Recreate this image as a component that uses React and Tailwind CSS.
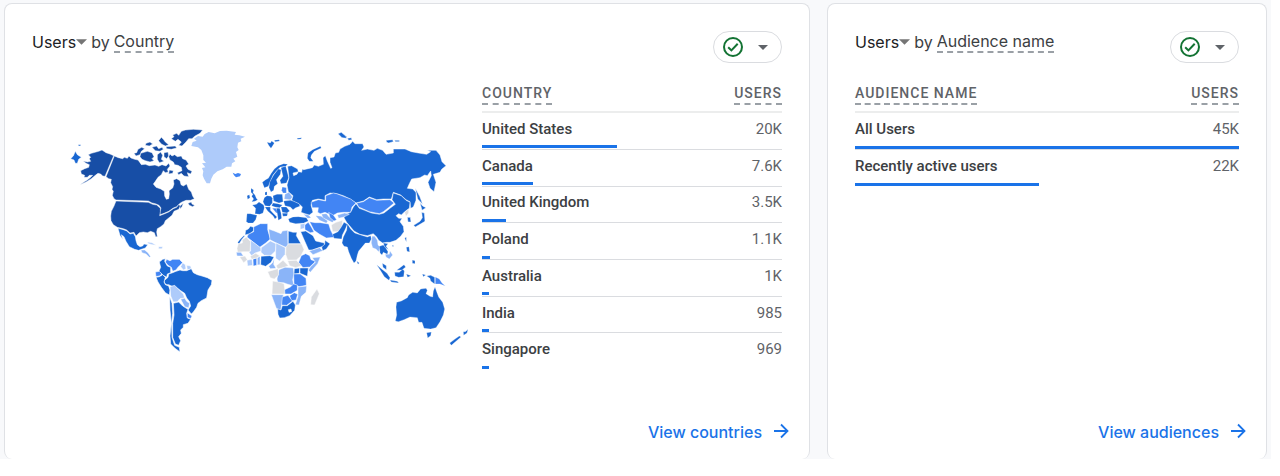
import React from "react";

const NAVY = "#174ea6";
const BLUE = "#1967d2";
const MID = "#4285f4";
const SOFT = "#8ab4f8";
const PALE = "#aecbfa";
const NONE = "#dadce0";

/* Each region: origin on the map, border width, then [fill, polygon points] for its lands. */
const REGIONS = [
  {
    name: "north-america",
    x: 180,
    y: 360,
    border: 1.4,
    lands: [
      [NAVY, "163,108 175,113 188,116 193,112 202,115 207,108 213,114 224,118 234,120 240,128 244,134 256,133 268,137 285,135 296,139 306,134 318,138 326,130 330,138 322,148 325,156 316,158 310,152 304,164 294,172 286,184 280,192 288,202 302,207 313,214 314,228 319,238 326,236 328,222 327,212 338,204 342,192 340,180 350,176 360,182 363,194 370,198 380,192 386,208 394,216 398,228 403,236 392,241 378,241 366,246 360,250 350,260 340,264 326,274 312,280 300,284 300,276 303,264 297,256 286,251 276,249 265,243 168,240 162,236 157,226 160,214 156,208 158,200 152,188 154,178 146,176 138,170"],
      [NAVY, "161,107 150,102 138,98 126,90 116,94 108,96 94,100 85,104 92,112 88,116 92,124 82,126 70,123 78,130 88,134 86,142 74,146 62,152 64,162 74,166 72,172 82,172 88,166 98,166 92,172 82,180 72,186 60,194 78,186 94,176 106,166 114,160 122,162 128,168 135,169"],
      [NAVY, "168,243 265,247 278,253 290,255 301,265 301,275 299,287 312,282 326,276 340,266 350,262 356,254 362,258 356,268 342,274 336,286 326,294 316,302 312,312 302,320 292,326 290,336 292,350 287,350 283,338 272,334 262,338 250,336 238,338 228,348 222,337 210,339 200,330 190,326 172,322 160,314 153,302 152,288 154,274 162,258"],
      [NAVY, "360,258 370,250 366,260 360,266"],
      [NAVY, "384,250 394,246 396,252 404,256 398,260 388,256"],
      [NAVY, "338,45 350,40 356,46 364,34 376,30 400,28 428,30 420,40 405,48 396,56 386,56 378,66 366,78 356,76 364,66 354,58 346,64 334,56 342,50"],
      [NAVY, "242,100 262,94 276,98 282,110 276,116 282,122 270,126 256,122 246,118 240,110"],
      [NAVY, "222,100 230,98 234,88 245,82 254,86 244,94 240,104 228,108"],
      [NAVY, "258,70 270,66 278,72 268,78 256,76"],
      [NAVY, "276,82 290,78 296,86 306,82 310,88 300,94 286,92"],
      [NAVY, "296,62 304,52 310,58 316,66 326,74 316,78 304,72"],
      [NAVY, "318,80 346,78 350,84 334,88 320,86"],
      [NAVY, "292,104 302,96 308,106 304,118 312,124 298,128 292,118"],
      [NAVY, "312,98 324,96 326,108 320,116 312,110"],
      [NAVY, "330,102 336,108 344,104 352,110 364,108 368,116 378,120 386,132 378,138 384,148 396,154 392,162 382,158 386,170 372,168 364,160 356,164 352,158 366,152 364,142 354,136 344,134 340,126 330,120 326,110"],
      [NAVY, "328,150 340,152 338,160 326,162"],
      [BLUE, "46,94 52,104 58,108 64,112 56,118 52,130 46,130 42,120 32,116 40,108"],
      [BLUE, "55,74 62,74 62,78 55,78"],
      [BLUE, "174,325 190,329 200,333 210,342 220,340 226,350 228,362 232,374 240,380 248,378 252,372 263,374 256,384 244,388 236,391 224,388 208,380 198,364 192,350 184,344 188,358 180,346"],
      [SOFT, "243,390 254,390 264,398 272,410 268,412 258,402 246,398"],
      [PALE, "262,366 276,368 288,376 278,374 266,371"],
      [PALE, "296,380 308,380 306,386 296,386"],
    ],
  },
  {
    name: "south-america",
    x: 360,
    y: 690,
    border: 1.8,
    lands: [
      [BLUE, "118,96 128,88 136,86 134,94 142,108 152,112 152,128 142,132 140,142 130,136 116,125 122,112"],
      [MID, "140,88 150,92 158,88 178,88 188,98 180,106 174,112 168,120 158,124 154,112 144,106 136,96"],
      [PALE, "188,98 196,104 198,116 190,120 182,110"],
      [PALE, "200,106 212,108 214,116 202,120"],
      [BLUE, "132,152 144,142 146,132 158,128 168,124 180,120 188,122 200,122 214,116 220,128 232,134 246,138 262,143 276,151 274,164 264,180 260,204 244,212 234,220 230,232 220,246 214,252 204,240 212,228 208,214 200,204 194,190 182,182 168,172 154,168 146,164 140,164 134,160"],
      [MID, "106,126 118,124 126,132 118,138 108,140"],
      [BLUE, "108,142 118,140 128,134 136,142 132,156 136,164 146,168 150,180 148,195 136,188 124,172 114,156"],
      [PALE, "150,170 164,166 178,180 190,192 194,204 180,206 172,215 160,216 152,198"],
      [SOFT, "182,208 194,204 200,214 209,220 206,234 194,230"],
      [BLUE, "160,220 176,216 188,228 204,238 200,250 202,264 212,268 204,280 190,284 190,292 182,300 184,310 176,320 182,332 176,346 166,342 158,322 158,280 162,255"],
      [MID, "202,248 216,258 212,266 202,262"],
      [BLUE, "149,200 156,220 158,250 155,280 156,322 164,346 178,352 180,366 164,354 152,342 150,318 154,280 150,240"],
    ],
  },
  {
    name: "greenland",
    x: 390,
    y: 366,
    border: 0,
    lands: [
      [PALE, "184,72 188,60 200,56 192,50 204,42 218,44 224,36 236,30 254,34 270,27 290,26 318,30 314,38 328,40 345,44 332,50 334,58 324,62 322,76 326,84 318,90 322,104 310,110 316,118 306,124 304,134 290,134 278,142 262,148 250,158 244,170 240,184 230,184 222,170 218,160 220,148 216,138 226,136 216,124 228,122 220,114 220,100 214,84 204,76"],
      [MID, "308,152 316,156 324,153 333,156 330,163 318,166 312,160"],
    ],
  },
  {
    name: "europe",
    x: 675,
    y: 375,
    border: 0.6,
    lands: [
      [BLUE, "126,52 136,54 140,48 148,54 143,62 138,70 132,62"],
      [BLUE, "148,46 162,44 164,48 150,50"],
      [BLUE, "216,40 230,38 228,42 218,43"],
      [BLUE, "247,100 249,84 263,74 286,64 289,69 268,79 259,90 257,98 265,109 253,109"],
      [BLUE, "112,172 122,164 130,160 138,146 148,132 160,122 176,116 188,118 182,124 166,126 154,138 144,150 136,168 130,184 118,188"],
      [BLUE, "134,172 146,150 160,132 168,134 166,148 154,164 158,176 148,184 146,196 138,201 132,188"],
      [BLUE, "168,128 182,124 186,138 191,158 184,174 168,176 165,166 174,154"],
      [BLUE, "78,190 86,195 84,203 90,210 94,220 98,224 90,229 80,230 86,222 80,214 84,208 78,202"],
      [BLUE, "66,212 73,209 75,218 68,223"],
      [BLUE, "118,218 126,212 138,214 142,220 142,234 134,244 120,242 114,230"],
      [BLUE, "120,202 126,200 126,210 120,210"],
      [BLUE, "82,240 94,238 102,231 116,240 118,248 114,264 104,268 90,266 92,250"],
      [BLUE, "66,266 76,266 96,271 92,284 84,294 70,294 64,290"],
      [BLUE, "144,212 156,208 172,208 174,230 162,234 146,228"],
      [MID, "172,186 184,188 184,204 174,204 170,196"],
      [SOFT, "180,208 192,202 202,216 196,224 178,222"],
      [BLUE, "176,228 196,226 206,228 224,236 224,244 212,248 204,254 196,246 180,242"],
      [BLUE, "168,246 184,246 194,258 186,264 172,262"],
      [BLUE, "120,246 136,246 136,256 146,266 156,276 150,282 144,272 128,258"],
      [BLUE, "144,234 158,236 172,240 164,248 150,246 140,242"],
      [MID, "142,250 152,250 160,262 154,264"],
      [BLUE, "154,250 164,250 168,264 170,280 160,286 158,272"],
      [BLUE, "172,265 188,265 186,273 174,274"],
      [BLUE, "190,282 204,276 220,275 244,278 250,288 236,294 212,296 194,292"],
      [SOFT, "236,268 250,270 258,278 248,280"],
      [SOFT, "290,268 304,266 312,276 328,286 322,292 306,284 294,278"],
      [SOFT, "272,272 288,274 308,288 304,294 284,286"],
    ],
  },
  {
    name: "africa-middle-east",
    x: 675,
    y: 645,
    border: 1.4,
    lands: [
      [BLUE, "62,46 70,42 76,34 86,37 85,48 74,56 60,60"],
      [BLUE, "38,82 46,72 56,62 60,62 50,74 42,88"],
      [NONE, "36,100 40,86 52,84 52,74 64,66 77,80 75,110 54,110 38,112"],
      [MID, "86,36 106,26 128,26 128,44 136,72 122,84 104,97 66,66 70,58 86,50"],
      [SOFT, "131,42 148,48 168,56 172,48 188,46 189,96 180,96 150,82 135,74"],
      [BLUE, "190,48 204,52 216,52 214,62 228,86 190,86"],
      [PALE, "77,76 107,98 108,108 90,114 80,122 72,112 77,108"],
      [PALE, "109,98 136,78 153,86 151,108 138,121 118,121 108,112"],
      [PALE, "153,84 181,98 180,118 164,138 152,130 152,110"],
      [NONE, "183,96 190,87 230,87 237,104 227,124 214,135 188,135 182,118"],
      [NONE, "188,137 214,136 230,152 212,158 194,152"],
      [NONE, "154,152 174,136 190,152 178,157 158,162"],
      [BLUE, "108,124 134,122 147,126 138,142 122,154 107,149"],
      [SOFT, "148,130 146,148 153,160 136,161 131,154 142,144"],
      [MID, "229,122 242,116 254,122 258,134 272,139 254,156 234,158 221,142"],
      [SOFT, "262,128 286,126 278,146 256,172 250,166 256,156 271,142"],
      [SOFT, "162,164 180,157 205,159 207,176 203,194 207,213 186,207 176,203 158,203 156,192"],
      [NONE, "128,170 159,161 161,180 148,192 136,188"],
      [BLUE, "208,161 224,159 223,175 207,177"],
      [BLUE, "225,159 250,159 247,184 225,175"],
      [MID, "206,177 226,177 243,190 244,211 222,215 207,207"],
      [NONE, "143,198 164,202 177,206 181,237 141,237"],
      [MID, "179,224 196,216 206,207 217,210 217,226 198,237 180,237"],
      [SOFT, "219,216 245,213 243,232 229,244 222,270 211,269 219,244"],
      [MID, "194,242 208,233 218,238 213,255 199,257"],
      [SOFT, "139,239 175,239 171,264 167,286 154,280"],
      [MID, "172,246 189,241 202,258 185,271 170,270"],
      [BLUE, "158,282 168,285 172,272 187,272 204,259 211,270 209,286 194,302 178,308 164,309 159,298"],
      ["#ffffff", "190,284 198,282 200,290 192,292"],
      [NONE, "276,222 283,236 269,270 257,269 259,246"],
      [SOFT, "34,112 48,112 55,123 36,123"],
      [NONE, "44,126 60,123 67,134 56,143"],
      [PALE, "66,136 81,133 83,151 68,153"],
      [MID, "84,132 95,129 95,151 85,153"],
      [SOFT, "97,128 105,124 105,149 97,150"],
      [NONE, "76,124 92,115 105,123 94,129 80,133"],
      [BLUE, "227,50 242,48 264,62 272,78 298,84 298,92 262,105 251,105 239,78"],
      [MID, "239,30 250,22 259,36 267,51 256,53 240,44"],
      [PALE, "226,28 240,25 238,40 226,43"],
      [SOFT, "253,108 284,98 293,107 264,119"],
      [BLUE, "290,96 299,88 300,76 315,86 304,102 293,107"],
      [MID, "254,20 270,23 286,23 311,27 317,46 328,67 304,69 284,58 267,46 261,34"],
    ],
  },
  {
    name: "asia",
    x: 990,
    y: 375,
    border: 1.4,
    lands: [
      [BLUE, "-127,124 -115,122 -97,132 -95,140 -111,144 -109,152 -99,148 -95,140 -85,142 -83,132 -79,134 -53,128 -47,120 -35,124 -20,118 -21,98 -14,92 -8,108 2,130 6,128 0,112 0,98 12,96 16,84 26,82 30,72 44,64 60,58 68,49 75,56 98,56 102,66 95,76 112,72 132,76 142,70 158,76 168,88 190,84 190,72 225,72 244,80 265,84 290,88 302,80 292,76 318,76 330,90 336,110 348,122 335,133 330,142 310,148 318,172 312,200 300,190 294,172 304,152 302,138 292,152 284,150 270,158 245,162 238,176 232,190 248,192 258,202 258,226 250,246 242,250 240,230 228,224 212,210 190,202 184,222 160,222 140,224 118,216 100,228 78,234 60,222 40,212 20,206 0,204 -15,212 -15,226 -35,222 -53,226 -57,240 -51,262 -62,270 -75,266 -87,262 -83,246 -93,236 -115,226 -111,212 -125,200 -129,180 -123,158"],
      [BLUE, "24,26 34,22 48,34 50,40 36,38"],
      [BLUE, "52,40 64,38 66,44 56,46"],
      [BLUE, "168,46 188,44 190,50 176,54 170,52"],
      [BLUE, "194,46 208,46 208,50 196,50"],
      [MID, "-57,232 -35,224 -13,228 -13,212 10,204 20,206 40,214 62,222 78,234 66,246 62,262 40,262 22,264 8,272 -15,262 -29,266 -37,262 -35,248 -53,248"],
      [MID, "80,234 100,230 118,218 140,226 180,224 192,234 178,246 160,260 148,266 118,260 100,252 86,246"],
      [BLUE, "78,236 88,250 104,256 124,264 148,268 162,264 180,250 196,238 186,224 190,204 214,212 228,226 240,232 238,250 224,260 214,270 206,266 198,272 206,280 216,280 210,290 220,304 222,320 212,334 198,346 180,352 170,352 158,354 146,346 140,336 130,326 112,332 90,328 72,318 62,306 50,292 42,278 46,268 62,262 70,246"],
      [NONE, "224,262 236,252 236,264 228,274"],
      [BLUE, "232,277 241,277 243,291 234,291"],
      [BLUE, "275,262 283,264 285,289 270,298 256,306 251,301 270,289 277,278"],
      [BLUE, "270,233 278,243 288,248 276,256"],
      [BLUE, "256,190 269,214 278,238 263,222"],
      [SOFT, "22,270 44,264 58,268 42,276 26,280"],
      [MID, "-4,262 10,270 20,284 12,288 0,278"],
      [NONE, "4,300 18,292 38,286 36,304 24,320 8,320"],
    ],
  },
  {
    name: "south-asia-oceania",
    x: 990,
    y: 645,
    border: 0.8,
    lands: [
      [BLUE, "8,58 24,50 34,36 42,22 52,28 45,44 37,60 35,72 12,70"],
      [BLUE, "52,26 62,42 74,54 92,60 112,66 122,62 124,72 118,84 106,84 98,94 86,108 82,120 78,138 72,144 64,130 56,110 52,96 42,94 36,84 40,66 50,46"],
      [BLUE, "80,138 88,144 84,148"],
      [SOFT, "126,64 134,64 142,76 144,90 150,96 146,110 138,102 128,98 124,84"],
      [BLUE, "148,94 160,90 168,100 174,110 172,118 160,112 156,120 150,114"],
      [BLUE, "160,84 174,86 168,94 176,104 164,96"],
      [SOFT, "166,118 178,118 180,108 188,120 178,132 168,126"],
      [BLUE, "186,92 190,90 190,96"],
      [BLUE, "157,145 169,152 169,164 159,157"],
      [BLUE, "140,149 154,161 171,175 180,188 177,196 163,185 151,166"],
      [BLUE, "194,172 208,172 218,162 223,168 221,185 206,187 195,183"],
      [BLUE, "200,166 222,149 227,156 216,165"],
      [BLUE, "180,195 202,199 206,204 184,201"],
      [BLUE, "229,97 237,95 239,111 231,109"],
      [BLUE, "224,69 229,67 229,81"],
      [BLUE, "247,135 255,137 255,146 247,145"],
      [BLUE, "229,177 243,182 233,187"],
      [BLUE, "277,177 287,180 280,185"],
      [BLUE, "290,183 302,181 314,187 314,207 302,198 300,190"],
      [MID, "316,186 328,192 336,204 346,213 330,207 316,207"],
      [BLUE, "200,262 214,258 232,248 236,240 248,232 262,234 272,222 288,220 292,226 288,236 300,244 308,246 310,228 315,216 320,230 326,246 338,262 344,282 340,300 330,320 318,338 302,342 282,340 276,322 266,322 262,308 240,306 222,314 205,320 196,318 200,300 198,276"],
      [BLUE, "290,353 304,351 302,362 293,369"],
      [BLUE, "359,384 374,373 388,363 393,366 378,379 364,391"],
      [BLUE, "400,350 406,350 414,343 411,354 401,361"],
    ],
  },
];

const COUNTRIES = [
  { name: "United States", users: "20K", share: 45 },
  { name: "Canada", users: "7.6K", share: 17 },
  { name: "United Kingdom", users: "3.5K", share: 8 },
  { name: "Poland", users: "1.1K", share: 2.6 },
  { name: "Australia", users: "1K", share: 2.4 },
  { name: "India", users: "985", share: 2.3 },
  { name: "Singapore", users: "969", share: 2.3 },
];

const AUDIENCES = [
  { name: "All Users", users: "45K", share: 100 },
  { name: "Recently active users", users: "22K", share: 48 },
];

function WorldMap() {
  return (
    <svg viewBox="96 249 1350 858" className="block w-full" role="img" aria-label="Users by country map">
      {REGIONS.map((r) => (
        <g key={r.name} transform={`translate(${r.x} ${r.y})`}>
          {r.lands.map(([fill, points]) => (
            <polygon key={points} points={points} fill={fill} stroke="#ffffff" strokeWidth={r.border} strokeLinejoin="round" />
          ))}
        </g>
      ))}
    </svg>
  );
}

function Caret({ className }) {
  return (
    <svg viewBox="0 0 10 5" className={className} aria-hidden="true">
      <path d="M0 0h10L5 5z" fill="currentColor" />
    </svg>
  );
}

function CardHeader({ dimension }) {
  return (
    <header className="flex items-start justify-between">
      <h2 className="flex items-center text-base leading-5 text-[#3c4043]">
        <button type="button" className="flex items-center text-[#202124]">
          Users
          <Caret className="h-[6px] w-[11px] text-[#757575]" />
        </button>
        <span className="ml-1">by</span>
        <button type="button" className="ml-1 border-b-2 border-dashed border-[#9aa0a6]">
          {dimension}
        </button>
      </h2>
      <button
        type="button"
        aria-label="Data quality"
        className="flex h-8 w-[69px] items-center justify-between rounded-full border border-[#dadce0] pr-[13px] pl-[9px]"
      >
        <svg viewBox="0 0 20 20" className="size-5" fill="none" stroke="#137333" strokeWidth="2" aria-hidden="true">
          <circle cx="10" cy="10" r="9" />
          <path d="M5.2 10.2l3.2 3.2 6.3-6.6" />
        </svg>
        <Caret className="h-[5px] w-[10px] text-[#5f6368]" />
      </button>
    </header>
  );
}

function UsersTable({ label, rows, className }) {
  return (
    <table className={`w-full border-collapse font-[Roboto,sans-serif] ${className}`}>
      <thead>
        <tr className="h-[29px] border-b-2 border-[#eceded] align-top text-sm leading-5 text-[#5f6368]">
          <th scope="col" className="p-0 text-left font-medium">
            <span className="inline-block border-b-2 border-dashed border-[#9aa0a6] tracking-[1px] uppercase">{label}</span>
          </th>
          <th scope="col" className="p-0 text-right font-medium">
            <span className="inline-block border-b-2 border-dashed border-[#9aa0a6] tracking-[1px] uppercase">Users</span>
          </th>
        </tr>
      </thead>
      <tbody>
        {rows.map((row) => (
          <tr key={row.name} className="relative border-b border-[#dadce0] text-[15px] leading-5 last:border-b-0">
            <th scope="row" className="px-0 pt-0 pb-1 text-left font-medium text-[#3c4043]">
              {row.name}
              <span className="absolute bottom-0 left-0 h-[3px] bg-[#1a73e8]" style={{ width: `${row.share}%` }} />
            </th>
            <td className="px-0 pt-0 pb-1 text-right text-[#5f6368]">{row.users}</td>
          </tr>
        ))}
      </tbody>
    </table>
  );
}

function CardFooter({ children }) {
  return (
    <footer className="-mr-2 mt-auto flex justify-end">
      <a href="#" className="flex items-center gap-2 text-base leading-6 font-medium text-[#1a73e8]">
        {children}
        <svg viewBox="0 0 20 20" className="size-5" fill="none" stroke="currentColor" strokeWidth="1.8" aria-hidden="true">
          <path d="M4 9h14M11 2.5L17.5 9l-6.5 6.5" />
        </svg>
      </a>
    </footer>
  );
}

function Card({ children }) {
  return (
    <section className="flex min-h-[456px] flex-col rounded-lg border border-b-0 border-[#dfe1e5] bg-white px-[27px] pt-[27px] pb-[15px]">
      {children}
    </section>
  );
}

export default function App() {
  return (
    <div className="bg-white pr-[9px] font-[Inter,sans-serif]">
      <main className="grid grid-cols-[806fr_440fr] gap-[17px] bg-[#f8f9fb] px-1 pt-[3px]">
        <Card>
          <CardHeader dimension="Country" />
          <div className="mt-5 grid grid-cols-[3fr_2fr] items-start">
            <WorldMap />
            <UsersTable label="Country" rows={COUNTRIES} className="h-[286px]" />
          </div>
          <CardFooter>View countries</CardFooter>
        </Card>
        <Card>
          <CardHeader dimension="Audience name" />
          <div className="mt-5">
            <UsersTable label="Audience name" rows={AUDIENCES} className="h-[103px]" />
          </div>
          <CardFooter>View audiences</CardFooter>
        </Card>
      </main>
    </div>
  );
}
